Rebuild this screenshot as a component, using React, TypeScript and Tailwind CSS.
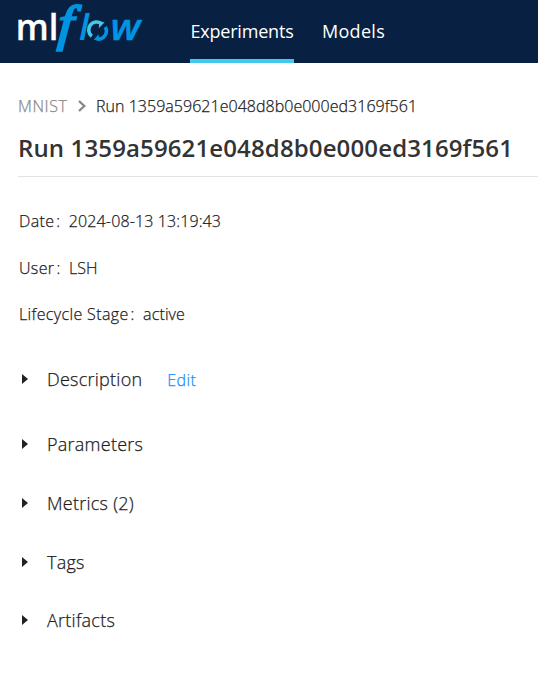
import React from "react";

const RUN_NAME = "Run 1359a59621e048d8b0e000ed3169f561";

function Logo() {
  return (
    <svg width="160" height="63" viewBox="0 0 160 63" className="block shrink-0" role="img" aria-label="mlflow">
      <text x="15.7" y="40" fill="#fff" stroke="#fff" strokeWidth=".3" fontFamily="Open Sans" fontWeight="600" fontSize="35.5" textLength="42.6" lengthAdjust="spacingAndGlyphs">ml</text>
      <text transform="translate(59.4 40) skewX(-4) scale(1.1 1)" fill="#0194e2" stroke="#0194e2" strokeWidth="2.3" fontFamily="Liberation Serif" fontStyle="italic" fontSize="49.5" x="-2">f</text>
      <text x="79" y="40" fill="#0194e2" fontFamily="Open Sans" fontStyle="italic" fontWeight="600" fontSize="36">l</text>
      <g fill="none" strokeWidth="3.6">
        <path d="M91.8 36.2A7.9 7.9 0 0 1 101.4 23.6" stroke="#43c9ed" />
        <path d="M105.2 27A7.9 7.9 0 0 1 96.6 38.8" stroke="#0194e2" />
      </g>
      <path d="M98.8 28.2l.4-6.6 5.4.6z" fill="#43c9ed" />
      <path d="M98.6 34.2l-4.8 5.6 5.6.8z" fill="#0194e2" />
      <text x="110.5" y="40" fill="#0194e2" stroke="#0194e2" strokeWidth=".4" fontFamily="Open Sans" fontStyle="italic" fontWeight="600" fontSize="36" textLength="30" lengthAdjust="spacingAndGlyphs">w</text>
    </svg>
  );
}

function Caret() {
  return (
    <svg width="6" height="10" viewBox="0 0 6 10" className="ml-[22px] mr-[19px] block shrink-0">
      <path d="M0 0L6 5L0 10Z" fill="#222" />
    </svg>
  );
}

function Field({ label, value, className }: { label: string; value: string; className: string }) {
  return (
    <div className={`flex h-6 items-center pl-[19px] text-[16px] ${className}`}>
      <span className="tracking-[0.36px]">{label}</span>
      <span className="w-[14.5px] shrink-0 pl-[2px]">:</span>
      <span className="tracking-[0.12px]">{value}</span>
    </div>
  );
}

function Section({ title, className, action }: { title: string; className: string; action?: string }) {
  return (
    <div className={`flex h-7 items-center text-[18px] ${className}`}>
      <Caret />
      <span className="tracking-[0.25px]">{title}</span>
      {action && <a className="ml-[25px] mt-px text-[16px] tracking-[0.4px] text-[#1890ff]">{action}</a>}
    </div>
  );
}

export default function App() {
  return (
    <div className="h-[678px] w-[538px] overflow-hidden bg-white font-['Open_Sans','Noto_Sans',sans-serif] font-light text-[#1c1c1c] [-webkit-text-stroke:0.25px]">
      <header className="flex h-[63px] bg-[#082142] font-normal [-webkit-text-stroke:0px]">
        <Logo />
        <nav className="ml-[30px] flex h-[63px] text-[18px] text-white">
          <a className="flex h-[63px] w-[104px] items-center justify-center whitespace-nowrap border-b-4 border-[#43c9ed] pt-1 tracking-[-0.2px]">Experiments</a>
          <a className="ml-[28px] flex h-[63px] items-center whitespace-nowrap border-b-4 border-transparent pt-1 tracking-[0.3px]">Models</a>
        </nav>
      </header>
      <div className="mt-[31px] flex h-6 items-center pl-[18px] text-[16px]">
        <span className="w-[49px] tracking-[0.6px] text-[#888]">MNIST</span>
        <svg width="8" height="12" viewBox="0 0 8 12" className="ml-[11px] mr-[10px] shrink-0" fill="none" stroke="#888" strokeWidth="2.4">
          <path d="M1 1L6.3 6L1 11" />
        </svg>
        <span className="whitespace-nowrap tracking-[0.03px]">{RUN_NAME}</span>
      </div>
      <h1 className="ml-[18px] mt-3 flex h-[47px] items-start whitespace-nowrap border-b border-[#e2e2e2] text-[24px] font-semibold leading-9 tracking-[0.13px] text-[#333] [-webkit-text-stroke:0px]">{RUN_NAME}</h1>
      <Field label="Date" value="2024-08-13 13:19:43" className="mt-8" />
      <Field label="User" value="LSH" className="mt-[23px]" />
      <Field label="Lifecycle Stage" value="active" className="mt-[22px]" />
      <Section title="Description" action="Edit" className="mt-[39px]" />
      <Section title="Parameters" className="mt-[37px]" />
      <Section title="Metrics (2)" className="mt-[31px]" />
      <Section title="Tags" className="mt-[31px]" />
      <Section title="Artifacts" className="mt-[30px]" />
    </div>
  );
}
